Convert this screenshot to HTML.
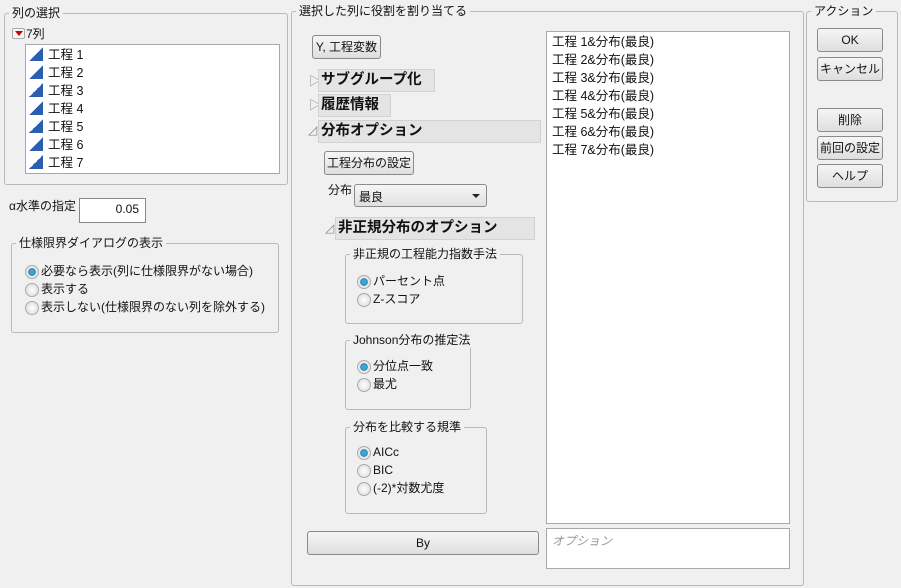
<!DOCTYPE html>
<html><head><meta charset="utf-8"><style>
*{box-sizing:border-box}
body{margin:0;width:901px;height:588px;background:#f0f0f0;font-family:"Liberation Sans","Noto Sans CJK JP",sans-serif;font-size:12px;color:#111;position:relative;overflow:hidden}
.a{position:absolute}
.grp{position:absolute;border:1px solid #b8b8b8;border-radius:3px}
.gt{position:absolute;top:-9px;left:4px;background:#f0f0f0;padding:0 3px;line-height:16px;white-space:nowrap}
.btn{position:absolute;border:1px solid #8a8a8a;border-radius:3px;background:linear-gradient(#f6f6f6,#dedede);text-align:center;white-space:nowrap}
.list{position:absolute;background:#fff;border:1px solid #a8a8a8}
.hdr{position:absolute;background:#e4e4e4;border:1px solid #d2d2d2;font-weight:bold;font-size:14.5px;padding-left:2px;line-height:21px;white-space:nowrap}
.rad{position:absolute;white-space:nowrap;line-height:16px;padding-left:16px}
.rad:before{content:"";position:absolute;left:0;top:2px;width:12px;height:12px;border-radius:50%;border:1px solid #aaa;background:radial-gradient(#fff,#d8d8d8)}
.rad.on:before{background:radial-gradient(#3aa6d8 0 2.5px,#1d6e9c 3.5px,#e8e8e8 4px)}
.ico{display:inline-block;width:14px;height:14px;background:linear-gradient(to bottom right,transparent 50%,#2a5fb0 50%);margin-right:5px;vertical-align:-2px}
.tri{position:absolute;font-size:12px;color:#888}
</style></head><body>

<div class="grp" style="left:4px;top:13px;width:284px;height:172px"><span class="gt">列の選択</span></div>
<div class="a" style="left:12px;top:28px;width:13px;height:11px;border:1px solid #aaa;border-radius:2px;background:#f6f6f6"><div style="position:absolute;left:2px;top:2px;border-left:4px solid transparent;border-right:4px solid transparent;border-top:5px solid #c00"></div></div>
<div class="a" style="left:26px;top:26px;line-height:16px">7列</div>
<div class="list" style="left:25px;top:44px;width:255px;height:130px;padding:1px 0 0 3px;line-height:18px;font-size:12.5px">
<div><span class="ico"></span>工程 1</div><div><span class="ico"></span>工程 2</div><div><span class="ico"></span>工程 3</div><div><span class="ico"></span>工程 4</div><div><span class="ico"></span>工程 5</div><div><span class="ico"></span>工程 6</div><div><span class="ico"></span>工程 7</div>
</div>

<div class="a" style="left:9px;top:198px;line-height:16px">α水準の指定</div>
<div class="a" style="left:79px;top:198px;width:67px;height:25px;background:#fff;border:1px solid #888;text-align:right;padding:3px 6px 0 0">0.05</div>

<div class="grp" style="left:11px;top:243px;width:268px;height:90px"><span class="gt">仕様限界ダイアログの表示</span></div>
<div class="rad on" style="left:25px;top:263px">必要なら表示(列に仕様限界がない場合)</div>
<div class="rad" style="left:25px;top:281px">表示する</div>
<div class="rad" style="left:25px;top:299px">表示しない(仕様限界のない列を除外する)</div>

<div class="grp" style="left:291px;top:11px;width:513px;height:575px"><span class="gt">選択した列に役割を割り当てる</span></div>
<div class="btn" style="left:312px;top:35px;width:69px;height:24px;line-height:22px">Y, 工程変数</div>
<div class="tri" style="left:309px;top:72px">▷</div>
<div class="hdr" style="left:318px;top:69px;width:117px;height:23px">サブグループ化</div>
<div class="tri" style="left:309px;top:96px">▷</div>
<div class="hdr" style="left:318px;top:94px;width:73px;height:23px">履歴情報</div>
<div class="tri" style="left:308px;top:123px">◿</div>
<div class="hdr" style="left:318px;top:120px;width:223px;height:23px">分布オプション</div>
<div class="btn" style="left:324px;top:151px;width:90px;height:24px;line-height:22px">工程分布の設定</div>
<div class="a" style="left:328px;top:181px">分布</div>
<div class="a" style="left:354px;top:184px;width:133px;height:23px;border:1px solid #8a8a8a;border-radius:3px;background:linear-gradient(#f6f6f6,#e0e0e0);padding:3px 0 0 4px">最良<div style="position:absolute;right:6px;top:9px;border-left:4px solid transparent;border-right:4px solid transparent;border-top:4px solid #222"></div></div>
<div class="tri" style="left:325px;top:221px">◿</div>
<div class="hdr" style="left:335px;top:217px;width:200px;height:23px">非正規分布のオプション</div>

<div class="grp" style="left:345px;top:254px;width:178px;height:70px"><span class="gt">非正規の工程能力指数手法</span></div>
<div class="rad on" style="left:357px;top:273px">パーセント点</div>
<div class="rad" style="left:357px;top:291px">Z-スコア</div>

<div class="grp" style="left:345px;top:340px;width:126px;height:70px"><span class="gt">Johnson分布の推定法</span></div>
<div class="rad on" style="left:357px;top:358px">分位点一致</div>
<div class="rad" style="left:357px;top:376px">最尤</div>

<div class="grp" style="left:345px;top:427px;width:142px;height:87px"><span class="gt">分布を比較する規準</span></div>
<div class="rad on" style="left:357px;top:444px">AICc</div>
<div class="rad" style="left:357px;top:462px">BIC</div>
<div class="rad" style="left:357px;top:480px">(-2)*対数尤度</div>

<div class="btn" style="left:307px;top:531px;width:232px;height:24px;line-height:22px">By</div>

<div class="list" style="left:546px;top:31px;width:244px;height:493px;padding:1px 0 0 5px;line-height:18px;font-size:12.5px">
<div>工程 1&amp;分布(最良)</div><div>工程 2&amp;分布(最良)</div><div>工程 3&amp;分布(最良)</div><div>工程 4&amp;分布(最良)</div><div>工程 5&amp;分布(最良)</div><div>工程 6&amp;分布(最良)</div><div>工程 7&amp;分布(最良)</div>
</div>
<div class="list" style="left:546px;top:528px;width:244px;height:41px;padding:3px 0 0 5px;color:#999;font-style:italic">オプション</div>

<div class="grp" style="left:806px;top:11px;width:92px;height:191px"><span class="gt">アクション</span></div>
<div class="btn" style="left:817px;top:28px;width:66px;height:24px;line-height:22px">OK</div>
<div class="btn" style="left:817px;top:57px;width:66px;height:24px;line-height:22px">キャンセル</div>
<div class="btn" style="left:817px;top:108px;width:66px;height:24px;line-height:22px">削除</div>
<div class="btn" style="left:817px;top:136px;width:66px;height:24px;line-height:22px">前回の設定</div>
<div class="btn" style="left:817px;top:164px;width:66px;height:24px;line-height:22px">ヘルプ</div>
</body></html>
